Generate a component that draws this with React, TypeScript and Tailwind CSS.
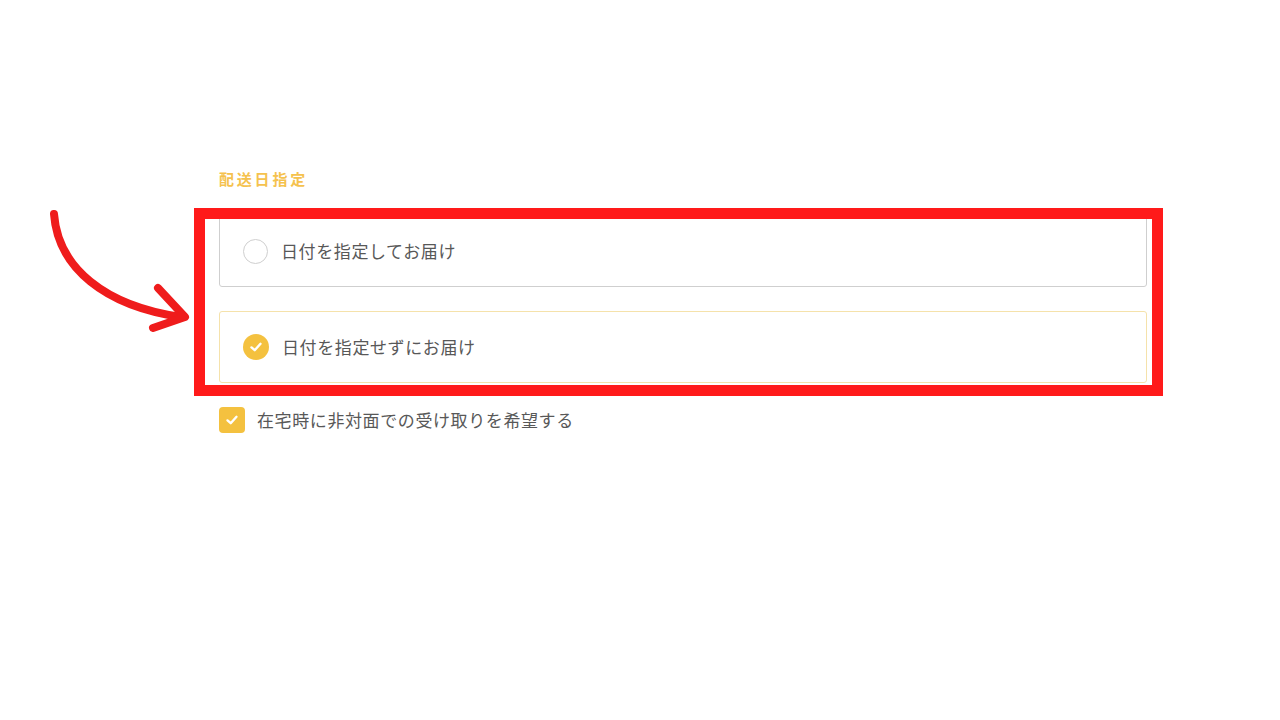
const jp = { fontFamily: '"Noto Sans CJK JP", "Noto Sans", sans-serif' };

function Check() {
  return (
    <svg width="16" height="16" viewBox="0 0 16 16" fill="none">
      <path d="M3.5 8.4 L6.7 11.2 L12.5 4.8" stroke="white" strokeWidth="2.4" strokeLinecap="round" strokeLinejoin="round" />
    </svg>
  );
}

function Radio({ checked }: { checked: boolean }) {
  if (checked) {
    return (
      <span className="flex h-[26px] w-[26px] shrink-0 items-center justify-center rounded-full bg-[#f4c13f]">
        <Check />
      </span>
    );
  }
  return <span className="h-[25px] w-[25px] shrink-0 rounded-full border-[1.5px] border-[#cfcfcf] bg-white" />;
}

function Option({ label, checked }: { label: string; checked: boolean }) {
  return (
    <div
      className={`flex h-[72px] items-center gap-[13px] rounded-[3px] border px-[23px] ${
        checked ? "border-[#f5e2ab]" : "border-[#cfcfcf]"
      }`}
    >
      <Radio checked={checked} />
      <span className="text-[17px] tracking-[0.6px] text-[#585858]">{label}</span>
    </div>
  );
}

export default function App() {
  return (
    <div className="relative h-[720px] w-[1280px] overflow-hidden bg-white" style={jp}>
      <div className="ml-[219px] w-[928px] pt-[168px]">
        <p className="text-[15px] font-bold leading-[22px] tracking-[2.8px] text-[#f5c24e]">配送日指定</p>

        <div className="mt-[25px] flex flex-col gap-[24px]">
          <Option label="日付を指定してお届け" checked={false} />
          <Option label="日付を指定せずにお届け" checked={true} />
        </div>

        <label className="mt-[24px] flex items-center gap-[12px]">
          <span className="flex h-[26px] w-[26px] items-center justify-center rounded-[4px] bg-[#f4c13f]">
            <Check />
          </span>
          <span className="text-[17px] tracking-[0.6px] text-[#585858]">在宅時に非対面での受け取りを希望する</span>
        </label>
      </div>

      {/* annotation overlay */}
      <div className="pointer-events-none absolute left-[194px] top-[208px] h-[188px] w-[969px] border-[11px] border-[#ff1a1a]" />
      <svg className="pointer-events-none absolute left-0 top-0" width="220" height="360" viewBox="0 0 220 360" fill="none">
        <path d="M54 214 C 58 268, 105 306, 181 317" stroke="#ef1c1c" strokeWidth="8" strokeLinecap="round" />
        <path d="M158 288 L 185 317 L 153 328" stroke="#ef1c1c" strokeWidth="8" strokeLinecap="round" strokeLinejoin="round" />
      </svg>
    </div>
  );
}
